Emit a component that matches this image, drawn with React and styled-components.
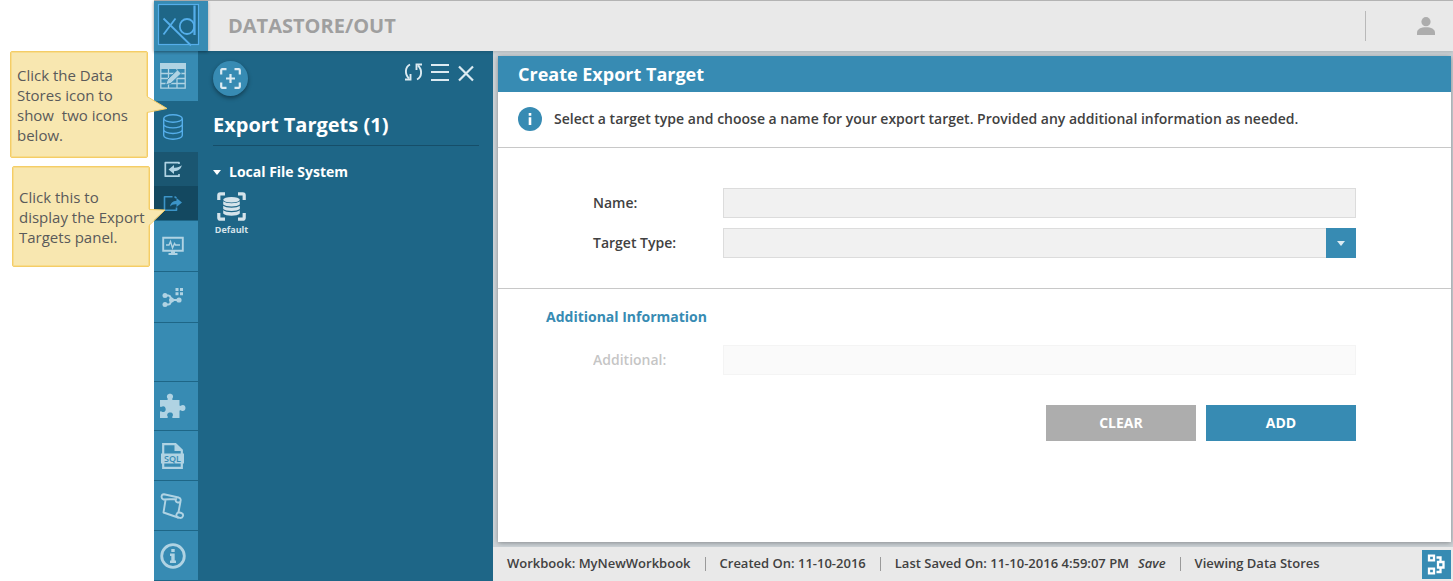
import React from "react";
import styled, { createGlobalStyle } from "styled-components";

const c = {
  blue: "#378bb3",
  panel: "#1e6687",
  deep: "#1a5671",
  deepest: "#134860",
  icon: "#b0d3e3",
  pale: "#dcebf2",
  accent: "#55aeea",
  grey: "#e9e9e9",
  text: "#414141",
};

const GlobalStyle = createGlobalStyle`
  * { box-sizing: border-box; }
  body { margin: 0; background: #fff; font-family: "Open Sans", "Noto Sans", sans-serif; color: ${c.text}; }
  button, input, select { font-family: inherit; }
  svg { display: block; flex: none; }
`;

const Page = styled.div`
  display: flex;
  min-height: 100vh;
`;

const Notes = styled.aside`
  width: 154px;
  flex: none;
  padding: 51px 0 0 10px;
  display: flex;
  flex-direction: column;
  gap: 8px;
`;

const Note = styled.div`
  position: relative;
  z-index: 2;
  width: 138px;
  margin-left: ${(p) => p.$indent || 0}px;
  padding: ${(p) => p.$pad}px 0 ${(p) => p.$pad - 1}px 6px;
  background: #f8e7b0;
  border: 1px solid #f4cd67;
  border-radius: 2px;
  box-shadow: inset 0 0 0 1px #f8dc8c;
  font-size: 15px;
  line-height: 20px;
  color: #5a5a5a;
  white-space: nowrap;
`;

const Tail = styled.svg`
  position: absolute;
  left: 135px;
  top: ${(p) => p.$top}px;
`;

const Shell = styled.div`
  flex: 1;
  min-width: 0;
  display: flex;
  flex-direction: column;
`;

const Header = styled.header`
  position: relative;
  z-index: 1;
  height: 51px;
  display: flex;
  align-items: center;
  background: ${c.grey};
  border-top: 1px solid #b3b3b3;
  box-shadow: 0 1px 3px rgba(0, 0, 0, 0.15);
`;

const Logo = styled.a`
  width: 54px;
  height: 50px;
  background: ${c.blue};
  box-shadow: 0 1px 3px rgba(0, 0, 0, 0.3);
`;

const Title = styled.h1`
  margin: 0 0 0 20px;
  flex: 1;
  font-size: 20px;
  line-height: 28px;
  font-weight: 700;
  color: #9f9f9f;
`;

const UserArea = styled.div`
  display: flex;
  align-items: center;
  justify-content: flex-end;
  width: 88px;
  height: 30px;
  padding-right: 18px;
  border-left: 1px solid #b9b9b9;
`;

const PlainButton = styled.button`
  display: flex;
  align-items: center;
  justify-content: center;
  border: 0;
  padding: 0;
  background: none;
  color: ${c.pale};
  cursor: pointer;
`;

const Body = styled.div`
  flex: 1;
  display: flex;
`;

const Nav = styled.nav`
  width: 44px;
  flex: none;
  display: flex;
  flex-direction: column;
  background: ${c.blue};
`;

const NavItem = styled.button`
  width: 44px;
  height: ${(p) => p.$h}px;
  padding: 0 0 0 6px;
  border: 0;
  border-bottom: ${(p) => (p.$line ? 1 : 0)}px solid ${c.panel};
  background: ${(p) => p.$bg || c.blue};
  color: ${(p) => p.$color || c.icon};
  display: flex;
  align-items: center;
  cursor: pointer;
`;

const Panel = styled.section`
  width: 295px;
  flex: none;
  padding: 10px 14px 0 15px;
  background: ${c.panel};
  color: #fff;
`;

const PanelTools = styled.div`
  display: flex;
  justify-content: space-between;
  align-items: flex-start;
  height: 46px;
`;

const RoundButton = styled(PlainButton)`
  width: 35px;
  height: 35px;
  border-radius: 50%;
  background: ${c.blue};
  box-shadow: 0 2px 4px rgba(0, 0, 0, 0.4);
`;

const ToolSet = styled.div`
  display: flex;
  align-items: center;
  gap: 8px;
  height: 22px;
  padding-right: 4px;
`;

const PanelTitle = styled.h2`
  margin: 0;
  height: 39px;
  padding-top: 4px;
  border-bottom: 1px solid #164e69;
  font-size: 20px;
  line-height: 28px;
  font-weight: 700;
`;

const Group = styled.button`
  display: flex;
  align-items: center;
  gap: 8px;
  margin-top: 16px;
  padding: 0;
  border: 0;
  background: none;
  color: #fff;
  font-size: 14px;
  line-height: 20px;
  font-weight: 700;
  cursor: pointer;
`;

const Target = styled.button`
  display: flex;
  flex-direction: column;
  align-items: center;
  gap: 1px;
  width: 37px;
  margin-top: 10px;
  padding: 0;
  border: 0;
  background: none;
  color: #d5e3ea;
  font-size: 9px;
  line-height: 15px;
  font-weight: 700;
  cursor: pointer;
`;

const Main = styled.main`
  flex: 1;
  min-width: 0;
  display: flex;
  flex-direction: column;
  background: #cdd3d7;
`;

const Card = styled.section`
  flex: 1;
  margin: 5px 2px 5px 5px;
  background: #fff;
  box-shadow: 0 1px 5px rgba(0, 0, 0, 0.35);
`;

const CardTitle = styled.h2`
  margin: 0;
  padding: 0 20px;
  background: ${c.blue};
  color: #fff;
  font-size: 18px;
  line-height: 36px;
  font-weight: 700;
`;

const Intro = styled.div`
  display: flex;
  align-items: center;
  gap: 12px;
  height: 56px;
  padding: 0 20px 1px;
  border-bottom: 1px solid #c8c8c8;
  font-size: 14px;
  line-height: 20px;
  font-weight: 600;
`;

const Fields = styled.div`
  display: flex;
  flex-direction: column;
  gap: 10px;
  padding: 40px 95px 30px;
  border-bottom: 1px solid #c8c8c8;
`;

const Extra = styled.div`
  padding: 18px 95px 0;
`;

const ExtraTitle = styled.h3`
  margin: 0 0 18px -47px;
  color: ${c.blue};
  font-size: 14px;
  line-height: 20px;
  font-weight: 700;
`;

const Field = styled.div`
  display: flex;
  align-items: center;
  height: 30px;
  opacity: ${(p) => (p.$off ? 0.3 : 1)};
`;

const Label = styled.label`
  width: 130px;
  flex: none;
  font-size: 14px;
  line-height: 20px;
  font-weight: 600;
`;

const Input = styled.input`
  flex: 1;
  min-width: 0;
  height: 30px;
  padding: 0 8px;
  border: 1px solid #dcdcdc;
  border-radius: 0;
  background: #f1f1f1;
  font-size: 14px;
`;

const SelectBox = styled.div`
  position: relative;
  flex: 1;
  display: flex;
`;

const Select = styled.select`
  appearance: none;
  flex: 1;
  height: 30px;
  padding: 0 38px 0 8px;
  border: 1px solid #dcdcdc;
  border-radius: 0;
  background: #f1f1f1;
  font-size: 14px;
`;

const Arrow = styled.span`
  position: absolute;
  right: 0;
  top: 0;
  width: 30px;
  height: 30px;
  display: flex;
  align-items: center;
  justify-content: center;
  background: ${c.blue};
  color: ${c.pale};
  pointer-events: none;
`;

const Actions = styled.div`
  display: flex;
  justify-content: flex-end;
  gap: 10px;
  margin-top: 30px;
`;

const Action = styled.button`
  width: 150px;
  height: 36px;
  padding: 0;
  border: 0;
  background: ${(p) => (p.$primary ? c.blue : "#adadad")};
  color: #fff;
  font-size: 14px;
  line-height: 20px;
  font-weight: 700;
  cursor: pointer;
`;

const Footer = styled.footer`
  display: flex;
  align-items: center;
  height: 34px;
  padding: 0 2px 0 14px;
  background: ${c.grey};
  font-size: 13px;
  font-weight: 600;
  white-space: nowrap;
`;

const Cell = styled.span`
  height: 14px;
  line-height: 12px;

  & + & {
    margin-left: 14px;
    padding-left: 14px;
    border-left: 1px solid #9a9a9a;
  }
`;

const Save = styled.a`
  margin-left: 9px;
  color: inherit;
  font-style: italic;
  text-decoration: none;
`;

const FlowButton = styled(PlainButton)`
  width: 29px;
  height: 29px;
  margin: 1px 0 0 auto;
  background: ${c.blue};
`;

const Svg = ({ w = 26, h = w, children, ...rest }) => (
  <svg width={w} height={h} viewBox={`0 0 ${w} ${h}`} fill="none" stroke="currentColor" aria-hidden="true" {...rest}>
    {children}
  </svg>
);

const LogoMark = () => (
  <Svg w={54} h={50} stroke={c.accent} strokeWidth="1.8">
    <rect x="4.5" y="3.5" width="40" height="40" fill={c.panel} strokeWidth="1.2" />
    <path d="M9.5 17.5 37 44.5M21.5 17.5 9.5 33.5" />
    <ellipse cx="33" cy="25.5" rx="7.200" ry="7.5" />
    <path d="M40.5 4.5V34" strokeWidth="2.200" />
  </Svg>
);

const SheetIcon = () => (
  <Svg>
    <path d="M0 0h26v6H0z" fill="currentColor" stroke="none" />
    <path d="M.8 5v20.2h24.4V5M1 10.5h24M1 15.5h24M1 20.5h24M8.5 6v19M17 6v19" strokeWidth="1.3" />
    <path d="M5.500 22 7.500 16.5 17.5 6.800 21.300 10.500 11 20.300z" fill="currentColor" stroke={c.blue} strokeWidth="1" />
  </Svg>
);

const StoreIcon = () => (
  <Svg strokeWidth="1.4">
    <ellipse cx="13" cy="4.5" rx="9.300" ry="3.7" />
    <path d="M3.700 4.5v17c0 2 4.200 3.7 9.300 3.7s9.300-1.700 9.300-3.700v-17M3.700 10.200c0 2 4.200 3.700 9.300 3.700s9.300-1.700 9.300-3.700M3.700 15.800c0 2 4.200 3.700 9.300 3.700s9.300-1.700 9.300-3.700" />
  </Svg>
);

const ImportIcon = () => (
  <Svg h={18}>
    <path d="M19 4V2.700H5.300v13.500H19V14" strokeWidth="1.700" strokeLinejoin="round" />
    <path d="M8.500 9.500 14 5v2.700c3.300.200 5.500-.800 7.800-2.500-.700 3.500-3.500 5.800-7.800 6v2.800z" fill="currentColor" stroke="none" />
  </Svg>
);

const ExportIcon = () => (
  <Svg h={18}>
    <path d="M12.500 2.700h-8v13.500H16.500V13.500M14.500 2.700l2 1.300" strokeWidth="1.600" strokeLinejoin="round" />
    <path d="M22 8.500 16.500 4v2.700c-4 .300-6 2.300-6.500 5.800 1.800-1.700 3.500-2.500 6.500-2.300V13z" fill="currentColor" stroke="none" />
  </Svg>
);

const MonitorIcon = () => (
  <Svg h={20}>
    <path d="M3.200 1.700h19.600v13H3.200z" strokeWidth="1.900" />
    <path d="M6 9h3l1.500-3.500 2 6.500 2-4.500 1 1.500H20" strokeWidth="1.400" />
    <path d="M11 15h4v2h2.500v2h-9v-2H11z" fill="currentColor" stroke="none" />
  </Svg>
);

const NodesIcon = () => (
  <Svg h={20}>
    <path d="M5 8.500h3.500c3 0 1.500 4.500 4.500 4.500h6M13 13c-3 0-1.500 4.500-4.500 4.500H5" strokeWidth="2.200" />
    <g fill="currentColor" stroke="none">
      <circle cx="5" cy="8.500" r="2.500" />
      <circle cx="5" cy="17.500" r="2.500" />
      <circle cx="11.500" cy="13" r="2.500" />
      <circle cx="19" cy="13" r="2.600" />
      <path d="M15.500 1h3v3h-3zM20 1h3v3h-3zM15.500 5.300h3v3h-3zM20 5.300h3v3h-3z" />
    </g>
  </Svg>
);

const PuzzleIcon = () => (
  <Svg>
    <path
      d="M0 7h7c1 0 1-.8.600-1.500C6 3 7.500.700 10 .700S14 3 12.500 5.300C12 6.200 12 7 13 7h6.500v5c0 1 .700 1.200 1.600.600 2-1.500 4.400-.300 4.400 2.400s-2.400 3.900-4.400 2.500c-.900-.600-1.600-.300-1.600.500v7h-6.500c-1 0-1-.700-.600-1.400 1.300-2.100.300-4.200-2.200-4.200s-3.800 2-2.500 4.200c.400.700.300 1.400-.700 1.400H0v-6c0-1 .700-1 1.500-.500 2 1.300 4.200.200 4.200-2.300s-2.200-3.700-4.200-2.400C.700 14.300 0 14 0 13.200z"
      fill="currentColor"
      stroke="none"
    />
  </Svg>
);

const SqlIcon = () => (
  <Svg>
    <path d="M3.200 12V1.200h12.300l6.300 6V12M3.200 20v4.800h18.600V20" strokeWidth="2.200" />
    <path d="M14.500 1v7H22z" fill="currentColor" stroke="none" />
    <path d="M1 10.500h23v10H1z" fill="currentColor" stroke="none" />
    <text x="12.500" y="18.800" textAnchor="middle" fontSize="9" fontWeight="600" fill={c.blue} stroke="none">
      SQL
    </text>
  </Svg>
);

const ScrollIcon = () => (
  <Svg strokeWidth="1.900" strokeLinejoin="round" strokeLinecap="round">
    <path d="M4 1.200 18.500 4.500c3.500 1 2.500 5.500-.800 5-2-.300-2.500-2.300-1.500-3.500L3.500 6.500C.500 5.500 1.300 1 4 1.200zM5.500 7 3.500 19.500 18 24.500M20.500 8.500 18.500 19" />
    <path d="M18 24.500c-3-1.500-1.300-5.500 1.500-5l1.800.500c3.200 1.200 1.700 5.300-1.300 4.900z" />
  </Svg>
);

const InfoRing = () => (
  <Svg>
    <circle cx="13" cy="13" r="11.300" strokeWidth="2.800" />
    <path d="M11.300 6h3.400v3h-3.400zM10 10.500h4.700v7H16V20h-6v-2.500h1.300V13H10z" fill="currentColor" stroke="none" />
  </Svg>
);

const FocusIcon = () => (
  <Svg w={21} strokeWidth="2.200">
    <path d="M1.200 6.500V2.200c0-.600.400-1 1-1h4.300M14.500 1.200h4.300c.600 0 1 .400 1 1v4.300M19.800 14.500v4.300c0 .600-.400 1-1 1h-4.300M6.500 19.800H2.200c-.600 0-1-.400-1-1v-4.300M10.500 6v9M6 10.500h9" />
  </Svg>
);

const TargetIcon = () => (
  <Svg w={29}>
    <path d="M1.800 8V3.300c0-.900.600-1.500 1.500-1.500H8M21 1.800h4.700c.900 0 1.500.600 1.500 1.500V8M27.200 21v4.700c0 .900-.600 1.500-1.500 1.500H21M8 27.200H3.300c-.900 0-1.500-.600-1.500-1.500V21" strokeWidth="3.200" />
    <g fill="currentColor" stroke="none">
      <ellipse cx="14.500" cy="7.700" rx="8.300" ry="2.800" />
      <path d="M6.200 9.300c2.500 2.500 14.100 2.500 16.600 0v3.200c-2.500 2.600-14.100 2.600-16.600 0zM6.200 13.800c2.500 2.500 14.100 2.500 16.600 0V17c-2.500 2.600-14.100 2.600-16.600 0zM6.200 18.300c2.500 2.500 14.100 2.500 16.600 0v3.200c-2.500 2.900-14.100 2.900-16.600 0z" />
    </g>
  </Svg>
);

const RefreshIcon = () => (
  <Svg w={19} h={20} strokeWidth="1.900">
    <path d="M6 2.500C1 5 .500 12 5 16.500M13 17.500C18 15 18.500 8 14 3.500" />
    <path d="M1 17.500h5.500v-5.500M18 2.500h-5.500V8" />
  </Svg>
);

const MenuIcon = () => (
  <Svg w={18} h={20} strokeWidth="2">
    <path d="M0 3h18M0 10h18M0 18h18" />
  </Svg>
);

const CloseIcon = () => (
  <Svg w={18} h={20} strokeWidth="2.200">
    <path d="M2 4.500 16 18.500M16 4.500 2 18.500" />
  </Svg>
);

const Caret = () => (
  <Svg w={8} h={5} fill="currentColor" stroke="none">
    <path d="M0 0h8L4 5z" />
  </Svg>
);

const UserIcon = () => (
  <Svg w={18} fill="#adadad" stroke="none">
    <circle cx="9" cy="4.700" r="4.600" />
    <path d="M0 18v-2c0-4 4-5.700 9-5.700s9 1.700 9 5.700v2z" />
  </Svg>
);

const InfoDot = () => (
  <Svg w={24} stroke="none">
    <circle cx="12" cy="12" r="12" fill={c.blue} />
    <path d="M10.700 6h2.600v2.800h-2.600zM10.700 10.300h2.600V18h-2.600z" fill="#fff" />
  </Svg>
);

const FlowIcon = () => (
  <Svg w={19} h={21} stroke="#fff" strokeWidth="2.300">
    <path d="M2 1.700h5v4.600H2zM2 14.700h5v4.600H2zM11 8h5.500v5.500H11zM9.500 3.500h4V8M9.500 18h4v-4" />
  </Svg>
);

const tools = [
  { label: "Refresh", Icon: RefreshIcon },
  { label: "Menu", Icon: MenuIcon },
  { label: "Close", Icon: CloseIcon },
];

const navItems = [
  { label: "Worksheets", h: 50, Icon: SheetIcon },
  { label: "Data stores", h: 51, Icon: StoreIcon, bg: c.panel, color: c.accent },
  { label: "Import sources", h: 34, Icon: ImportIcon, bg: c.deep },
  { label: "Export targets", h: 35, Icon: ExportIcon, bg: c.deepest, color: "#3c94c8", line: true },
  { label: "Monitor", h: 51, Icon: MonitorIcon, line: true },
  { label: "Data flow", h: 51, Icon: NodesIcon, line: true },
  { label: "Empty", h: 59, line: true },
  { label: "Extensions", h: 49, Icon: PuzzleIcon, line: true },
  { label: "SQL", h: 50, Icon: SqlIcon, line: true },
  { label: "Scripts", h: 50, Icon: ScrollIcon, line: true },
  { label: "About", h: 50, Icon: InfoRing, line: true },
];

export default function App() {
  return (
    <Page>
      <GlobalStyle />
      <Notes>
        <Note $pad={13}>
          Click the Data<br />
          Stores icon to<br />
          show&nbsp; two icons<br />
          below.
          <Tail $top={44} width="22" height="20" aria-hidden="true">
            <path d="M0 0 21 12.500 0 16.500z" fill="#f8e7b0" />
            <path d="M1 .500 21 12.500 1 16.500" fill="none" stroke="#f4cd67" />
          </Tail>
        </Note>
        <Note $pad={20} $indent={2}>
          Click this to<br />
          display the Export<br />
          Targets panel.
          <Tail $top={41} width="22" height="20" aria-hidden="true">
            <path d="M0 1 17 2 0 18z" fill="#f8e7b0" />
            <path d="M1 1.500 17 2 1 17.500" fill="none" stroke="#f4cd67" />
          </Tail>
        </Note>
      </Notes>
      <Shell>
        <Header>
          <Logo href="#" aria-label="Home">
            <LogoMark />
          </Logo>
          <Title>DATASTORE/OUT</Title>
          <UserArea>
            <PlainButton aria-label="User">
              <UserIcon />
            </PlainButton>
          </UserArea>
        </Header>
        <Body>
          <Nav>
            {navItems.map(({ label, h, Icon, bg, color, line }) => (
              <NavItem key={label} aria-label={label} $h={h} $bg={bg} $color={color} $line={line}>
                {Icon && <Icon />}
              </NavItem>
            ))}
          </Nav>
          <Panel>
            <PanelTools>
              <RoundButton aria-label="Add target">
                <FocusIcon />
              </RoundButton>
              <ToolSet>
                {tools.map(({ label, Icon }) => (
                  <PlainButton key={label} aria-label={label}>
                    <Icon />
                  </PlainButton>
                ))}
              </ToolSet>
            </PanelTools>
            <PanelTitle>Export Targets (1)</PanelTitle>
            <Group>
              <Caret />
              Local File System
            </Group>
            <Target>
              <TargetIcon />
              Default
            </Target>
          </Panel>
          <Main>
            <Card>
              <CardTitle>Create Export Target</CardTitle>
              <Intro>
                <InfoDot />
                Select a target type and choose a name for your export target. Provided any additional information as needed.
              </Intro>
              <Fields>
                <Field>
                  <Label htmlFor="name">Name:</Label>
                  <Input id="name" />
                </Field>
                <Field>
                  <Label htmlFor="type">Target Type:</Label>
                  <SelectBox>
                    <Select id="type" defaultValue="">
                      <option value="" />
                    </Select>
                    <Arrow>
                      <Caret />
                    </Arrow>
                  </SelectBox>
                </Field>
              </Fields>
              <Extra>
                <ExtraTitle>Additional Information</ExtraTitle>
                <Field $off>
                  <Label htmlFor="additional">Additional:</Label>
                  <Input id="additional" disabled />
                </Field>
                <Actions>
                  <Action>CLEAR</Action>
                  <Action $primary>ADD</Action>
                </Actions>
              </Extra>
            </Card>
            <Footer>
              <Cell>Workbook: MyNewWorkbook</Cell>
              <Cell>Created On: 11-10-2016</Cell>
              <Cell>
                Last Saved On: 11-10-2016 4:59:07 PM<Save href="#">Save</Save>
              </Cell>
              <Cell>Viewing Data Stores</Cell>
              <FlowButton aria-label="Flow view">
                <FlowIcon />
              </FlowButton>
            </Footer>
          </Main>
        </Body>
      </Shell>
    </Page>
  );
}
